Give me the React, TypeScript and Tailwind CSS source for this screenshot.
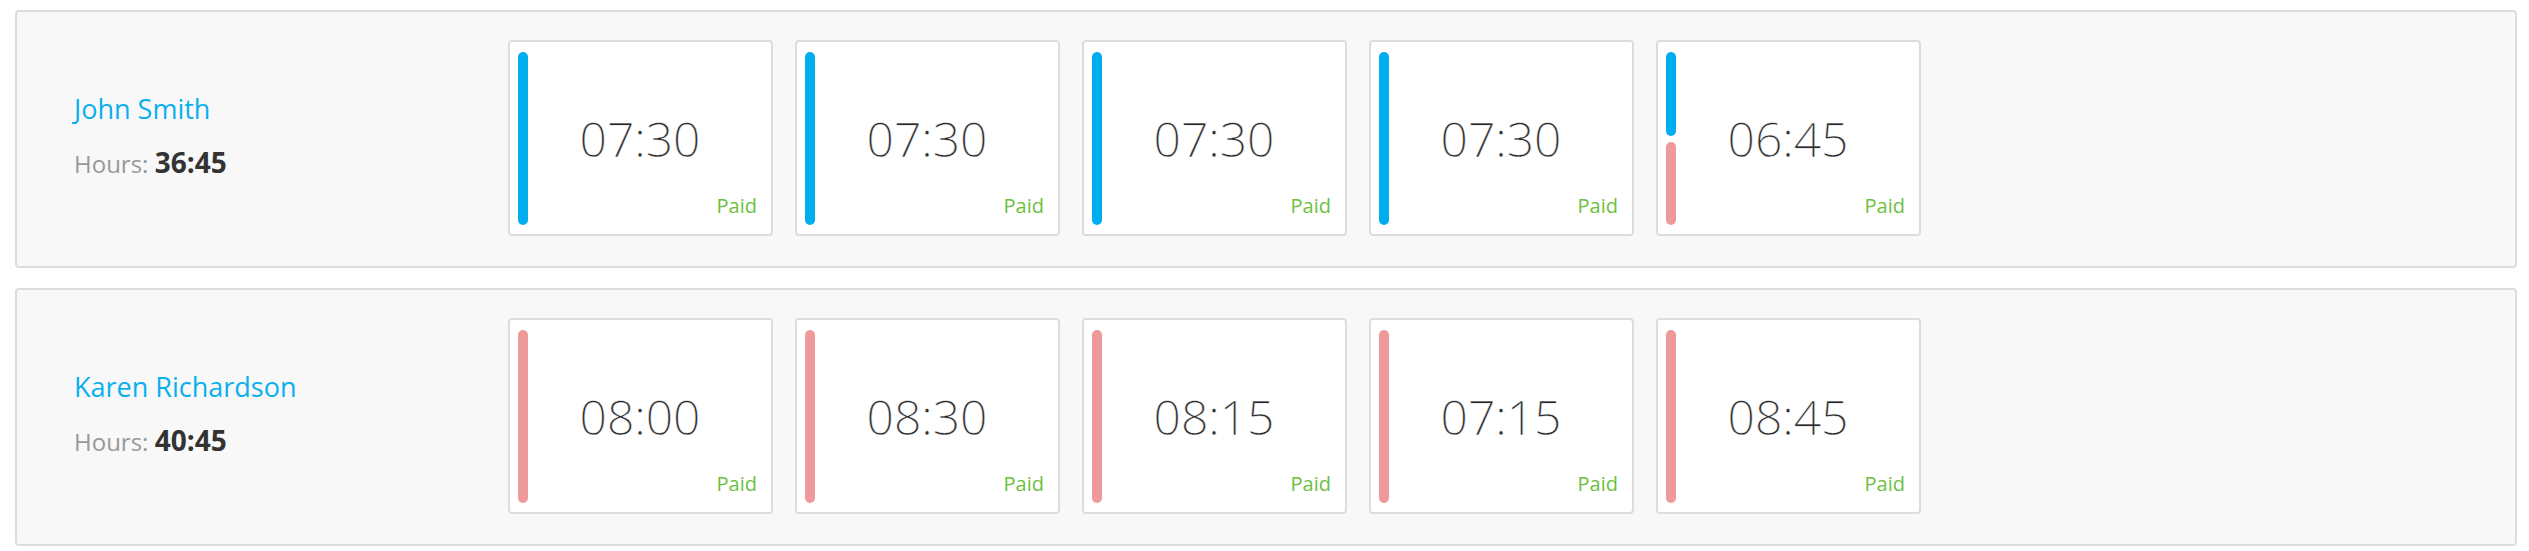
const rows = [
  {
    name: "John Smith",
    total: "36:45",
    days: [
      { time: "07:30", bars: ["blue"] },
      { time: "07:30", bars: ["blue"] },
      { time: "07:30", bars: ["blue"] },
      { time: "07:30", bars: ["blue"] },
      { time: "06:45", bars: ["blue", "pink"] },
    ],
  },
  {
    name: "Karen Richardson",
    total: "40:45",
    days: [
      { time: "08:00", bars: ["pink"] },
      { time: "08:30", bars: ["pink"] },
      { time: "08:15", bars: ["pink"] },
      { time: "07:15", bars: ["pink"] },
      { time: "08:45", bars: ["pink"] },
    ],
  },
];

const DayCard = ({ time, bars }: { time: string; bars: string[] }) => {
  return (
    <div className="grid w-[265px] h-[196px] bg-white border-2 border-[#dddddd] rounded-[4px] pt-[10px] pb-[9px] pl-[8px] pr-[10px]">
      <div className="col-start-1 row-start-1 justify-self-start flex flex-col gap-[6px] w-[10px]">
        {bars.map((b, i) => (
          <div
            key={i}
            className={
              b === "blue"
                ? "flex-1 rounded-full bg-[#00aeef]"
                : "flex-1 rounded-full bg-[#ee9a9b]"
            }
          />
        ))}
      </div>
      <div className="col-start-1 row-start-1 place-self-center ml-[1px] text-[48px] font-light text-[#2b2b2b] leading-none [-webkit-text-stroke:0.5px_#ffffff]">
        {time}
      </div>
      <div className="col-start-1 row-start-1 self-end justify-self-end mr-[4px] mb-[6px] text-[20px] leading-[27px] text-[#6cbf3f]">
        Paid
      </div>
    </div>
  );
};

export default function App() {
  return (
    <div
      className="bg-white w-full min-h-screen pt-[10px] pl-[15px] pr-[12px]"
      style={{ fontFamily: '"Open Sans", "Noto Sans", sans-serif' }}
    >
      {rows.map((row, idx) => (
        <div
          key={row.name}
          className={
            idx === 0
              ? "flex bg-[#f8f8f8] border-2 border-[#dddddd] rounded-[4px] pt-[28px] pb-[30px]"
              : "flex bg-[#f8f8f8] border-2 border-[#dddddd] rounded-[4px] pt-[28px] pb-[30px] mt-[20px]"
          }
        >
          <div className="w-[491px] shrink-0 pl-[57px] flex flex-col justify-center">
            <div className="text-[27px] leading-[36px] text-[#0aafee]">{row.name}</div>
            <div className="mt-[16px] leading-[38px]">
              <span className="text-[24px] text-[#999999]">Hours: </span>
              <span className="text-[28px] font-bold text-[#333333]">{row.total}</span>
            </div>
          </div>
          <div className="flex gap-[22px]">
            {row.days.map((d, i) => (
              <DayCard key={i} time={d.time} bars={d.bars} />
            ))}
          </div>
        </div>
      ))}
    </div>
  );
}
